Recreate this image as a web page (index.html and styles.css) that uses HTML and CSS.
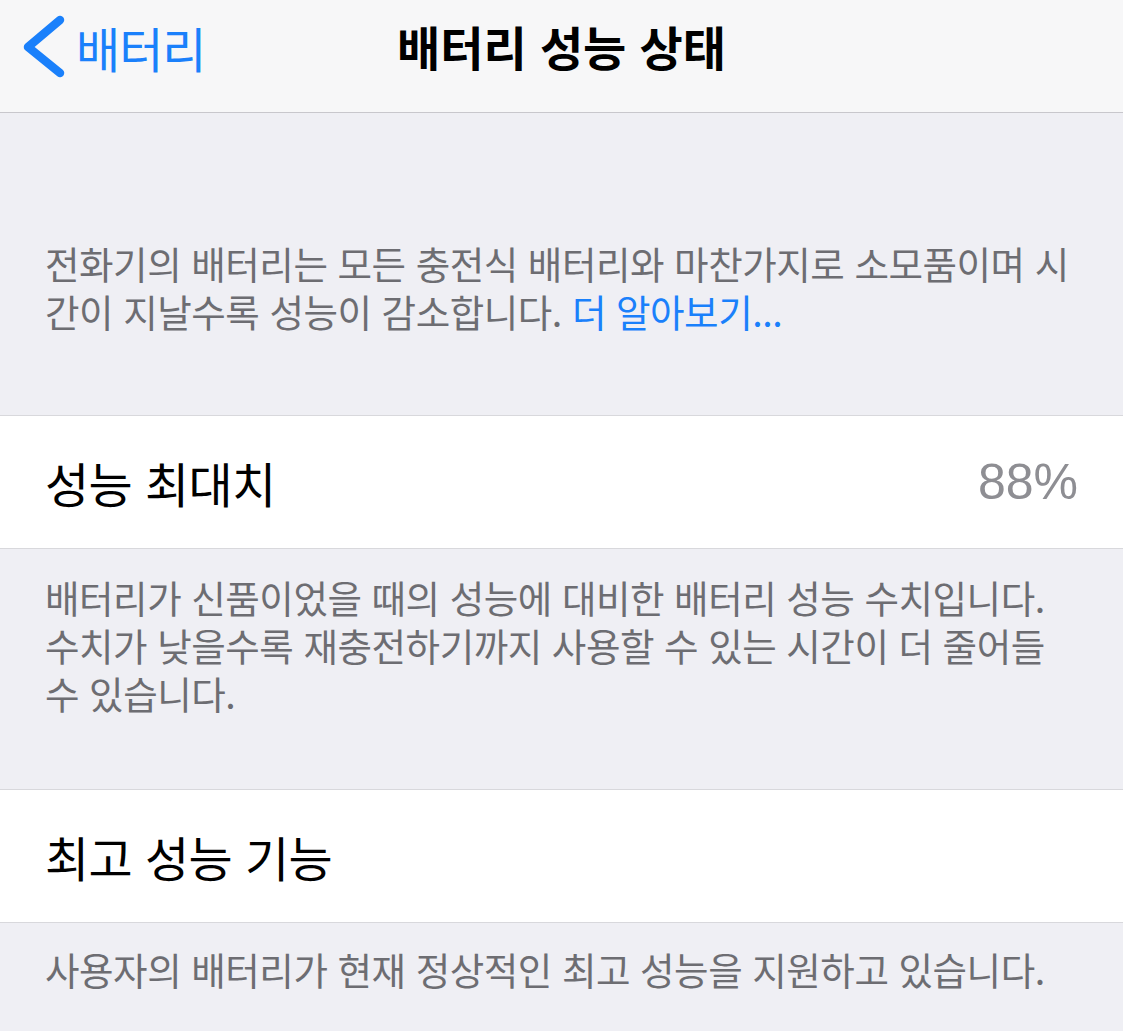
FILE: index.html
```html
<!DOCTYPE html>
<html lang="ko">
<head>
    <meta charset="UTF-8">
    <meta name="viewport" content="width=device-width, initial-scale=1.0">
    <link rel="stylesheet" href="styles.css">
</head>
<body>
    <header class="navbar">
        <a class="back" href="#">
            <svg class="chevron" width="48" height="74" viewBox="0 0 48 74">
                <path d="M40 10 L8 37 L40 63" fill="none" stroke="#1a80fb" stroke-width="8.5" stroke-linecap="round" stroke-linejoin="round"/>
            </svg>
            <span>배터리</span>
        </a>
        <div class="title">배터리 성능 상태</div>
    </header>

    <div class="footer top">
        전화기의 배터리는 모든 충전식 배터리와 마찬가지로 소모품이며 시간이 지날수록 성능이 감소합니다. <a href="#">더 알아보기...</a>
    </div>

    <div class="row">
        <span class="label">성능 최대치</span>
        <span class="value">88%</span>
    </div>
    <div class="footer">
        배터리가 신품이었을 때의 성능에 대비한 배터리 성능 수치입니다. 수치가 낮을수록 재충전하기까지 사용할 수 있는 시간이 더 줄어들 수 있습니다.
    </div>

    <div class="row">
        <span class="label">최고 성능 기능</span>
    </div>
    <div class="footer last">
        사용자의 배터리가 현재 정상적인 최고 성능을 지원하고 있습니다.
    </div>
</body>
</html>
```

FILE: styles.css
```css
body {
    margin: 0;
    padding: 0;
    background-color: #efeff4;
    font-family: "Noto Sans CJK KR", "Noto Sans", sans-serif;
    height: 100vh;
    overflow: hidden;
}

.navbar {
    position: relative;
    height: 112px;
    background-color: #f7f7f8;
    border-bottom: 1px solid #c8c7cc;
    display: flex;
    align-items: center;
    justify-content: center;
}

.back {
    position: absolute;
    left: 20px;
    top: 10px;
    display: flex;
    align-items: center;
    gap: 8px;
    color: #1a80fb;
    text-decoration: none;
    font-size: 48px;
    letter-spacing: -1px;
}

.back span {
    line-height: 74px;
}

.title {
    font-size: 47px;
    font-weight: bold;
    color: #000;
    margin-top: -22px;
}

.footer {
    padding: 24px 45px 72px;
    color: #6d6d72;
    font-size: 37.5px;
    line-height: 48px;
    letter-spacing: -0.45px;
    word-break: break-all;
}

.footer.top {
    padding-top: 126px;
    padding-bottom: 80px;
}

.footer.last {
    padding-top: 22px;
}

.footer a {
    color: #1a80fb;
    text-decoration: none;
}

.row {
    height: 132px;
    background-color: #fff;
    border-top: 1px solid #d8d8dc;
    border-bottom: 1px solid #d8d8dc;
    display: flex;
    align-items: center;
    justify-content: space-between;
    padding: 0 45px;
}

.label {
    font-size: 48px;
    color: #000;
    letter-spacing: -0.6px;
}

.value {
    font-family: "Liberation Sans", sans-serif;
    font-size: 50px;
    color: #8e8e93;
}
```
